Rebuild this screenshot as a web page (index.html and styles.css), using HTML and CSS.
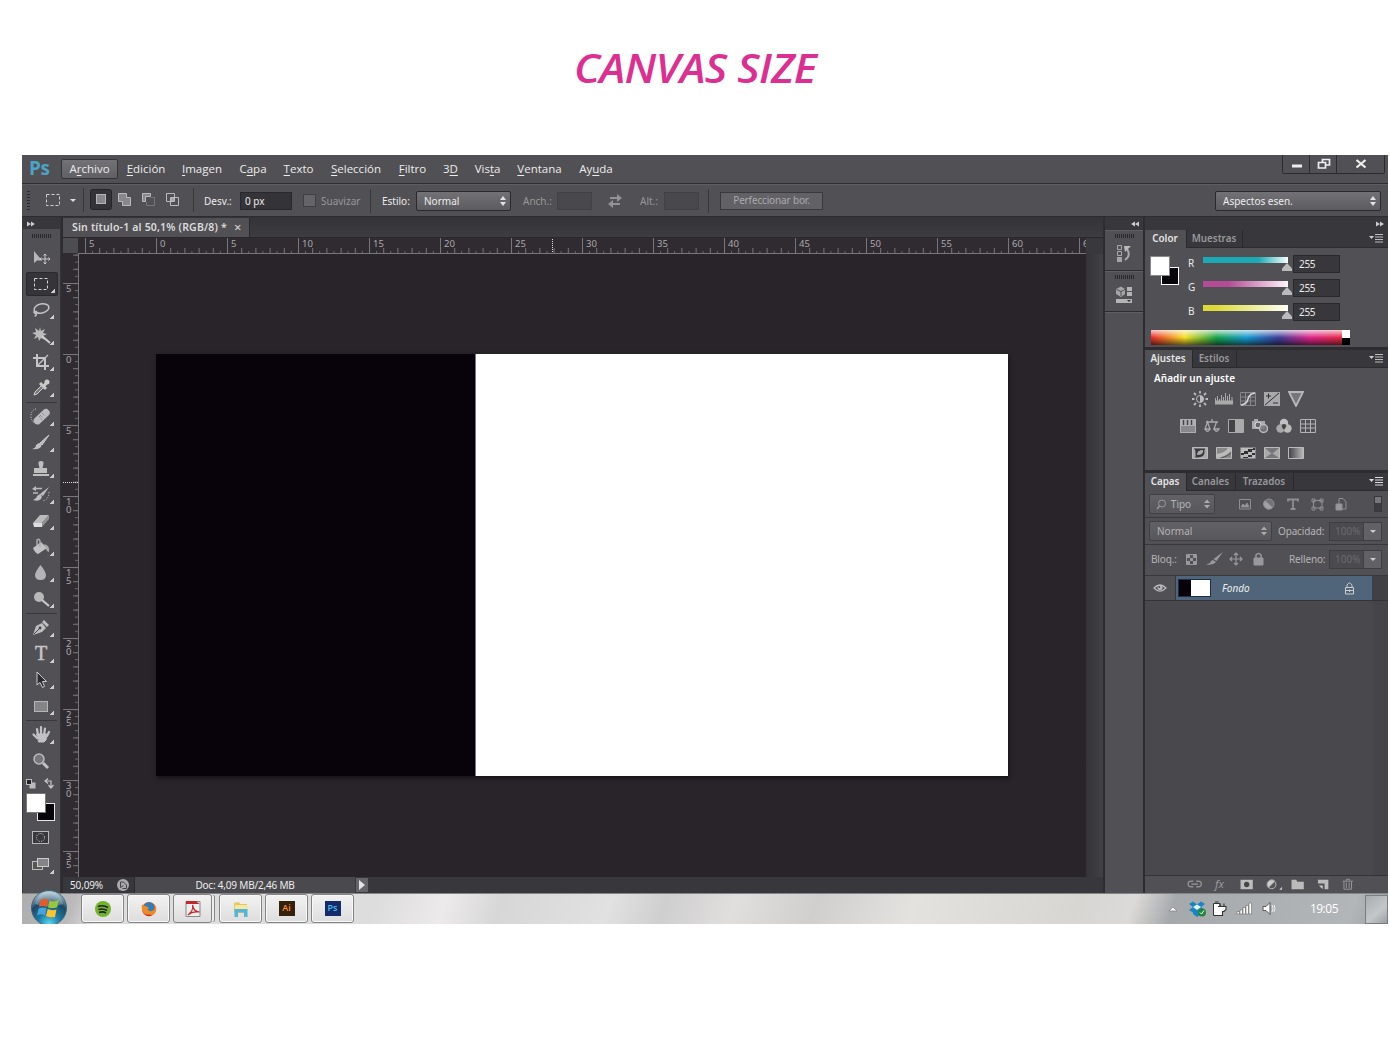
FILE: index.html
```html
<!DOCTYPE html>
<html lang="es">
<head>
<meta charset="utf-8">
<title>Canvas size</title>
<link rel="stylesheet" href="styles.css">
</head>
<body>
<h1 class="title">CANVAS SIZE</h1>
<main class="app">
  <header class="menubar">
    <span class="logo">Ps</span>
    <nav class="menu">
      <span class="item active w57">A<u>r</u>chivo</span><span class="item w55"><u>E</u>dición</span><span class="item w57"><u>I</u>magen</span><span class="item w45">C<u>a</u>pa</span><span class="item w46"><u>T</u>exto</span><span class="item w69"><u>S</u>elección</span><span class="item w44"><u>F</u>iltro</span><span class="item w32">3<u>D</u></span><span class="item w42">Vis<u>t</u>a</span><span class="item w62"><u>V</u>entana</span><span class="item w51">Ay<u>u</u>da</span>
    </nav>
    <div class="winbtns">
      <svg width="103" height="19" viewBox="0 0 103 19"><path d="M.5 0V17.500Q.5 18.500 1.500 18.500H101.500Q102.500 18.500 102.500 17.500V0M27.500 0V18M54.500 0V18" fill="none" stroke="#2c2b2f"/><path d="M10 9.500H20V12.500H10Z" fill="#eee"/><path d="M36.500 7.500H43.500V13H36.500ZM40.500 7V4.500H47.500V10H44" fill="none" stroke="#eee" stroke-width="1.700"/><path d="M74.500 5L83.500 12.500M83.500 5L74.500 12.500" stroke="#eee" stroke-width="2.200"/></svg>
    </div>
  </header>

  <section class="options">
    <svg class="opt-left" width="181" height="33" viewBox="0 0 181 33" fill="none">
      <path d="M6.500 7V26" stroke="#29282b" stroke-width="3" stroke-dasharray="1 2"/>
      <rect x="24.500" y="10.500" width="13" height="11" stroke="#d0d0d0" stroke-dasharray="3 2"/>
      <path d="M48 15H54L51 18Z" fill="#ddd"/>
      <path d="M61.500 4V28M171.500 4V28" stroke="#38373a"/>
      <rect x="68.500" y="5.500" width="21" height="20" rx="2" fill="#343337" stroke="#252428"/>
      <rect x="74.500" y="10.500" width="9" height="9" fill="#88878b" stroke="#b6b5b8"/>
      <g stroke="#bbb"><path d="M96.500 9.500H104.500V13.500H108.500V21.500H100.500V17.500H96.500Z" fill="#88878b"/><path d="M120.500 17.500V9.500H128.500V12.500H123.500V17.500Z" fill="#88878b"/><path d="M128.500 13.500H132.500V21.500H124.500V18" stroke="#77767a"/><path d="M144.500 9.500H152.500V17.500H144.500ZM148.500 13.500H156.500V21.500H148.500Z"/><path d="M149 14H152V17H149Z" fill="#999"/></g>
    </svg>
    <label class="olabel desv">Desv.:</label><span class="field f52">0 px</span>
    <span class="check"></span><label class="dim suav">Suavizar</label><i class="vsep"></i>
    <label class="olabel estilo">Estilo:</label>
    <span class="select s95">Normal<svg width="8" height="12" viewBox="0 0 8 12"><path d="M1 5L4 1L7 5ZM1 7L4 11L7 7Z" fill="#e3e3e3"/></svg></span>
    <label class="dim anch">Anch.:</label><span class="field off f34"></span>
    <svg class="swap" width="14" height="14" viewBox="0 0 14 14"><path d="M2 3H9V0L14 4L9 8V5H2ZM12 9H5V6L0 10L5 14V11H12Z" fill="#939296"/></svg>
    <label class="dim alt">Alt.:</label><span class="field off f34"></span><i class="vsep v2"></i>
    <span class="button">Perfeccionar bor.</span>
    <span class="select s165">Aspectos esen.<svg width="8" height="12" viewBox="0 0 8 12"><path d="M1 5L4 1L7 5ZM1 7L4 11L7 7Z" fill="#e3e3e3"/></svg></span>
  </section>

  <section class="workspace">
    <aside class="tools">
      <div class="dockhead"><svg width="8" height="6" viewBox="0 0 8 6"><path d="M0 .5L4 3L0 5.500ZM4 .5L8 3L4 5.500Z" fill="#ccc"/></svg></div>
      <div class="grip"></div>
      <div class="tool"><svg viewBox="0 0 38 26"><path d="M12 6V18L15 15.500H20Z" fill="#b7b6b8"/><path d="M23 9V19M18 14H28M21.500 10.500L23 9L24.500 10.500M21.500 17.500L23 19L24.500 17.500M19.500 12.500L18 14L19.500 15.500M26.500 12.500L28 14L26.500 15.500" fill="none" stroke="#ccc"/></svg></div>
      <div class="tool on more"><svg viewBox="0 0 38 26"><rect x="12.500" y="7.500" width="13" height="11" fill="none" stroke="#d4d4d4" stroke-dasharray="3 2"/></svg></div>
      <div class="tool more"><svg viewBox="0 0 38 26" fill="none" stroke="#c4c3c5" stroke-width="1.500"><ellipse cx="19.500" cy="11.500" rx="7.500" ry="4.500" transform="rotate(-12 19.500 11.500)"/><path d="M13 14Q11 15 13 16.500Q16 16 14 14M14 16Q15 19 12.500 19"/></svg></div>
      <div class="tool more"><svg viewBox="0 0 38 26"><path d="M18 4L19 8L23 6L21 10L25 11L21 13L23 17L19 15L17 18L16 14L12 16L14 12L10 10L14 9L13 5L17 8Z" fill="#bbb"/><path d="M20 13L28 20" stroke="#ccc" stroke-width="2"/></svg></div>
      <div class="tool more"><svg viewBox="0 0 38 26" fill="none" stroke="#c5c4c6" stroke-width="2"><path d="M15 5V17H27M11 9H23V21"/><path d="M16 16L26 6" stroke-width="1.200"/></svg></div>
      <div class="tool more"><svg viewBox="0 0 38 26"><path d="M12 20L13 17L20 10L22 12L15 19Z" fill="#777" stroke="#d0d0d0"/><path d="M18 8L24 14M22 11L25 7" stroke="#c8c8c8" stroke-width="3"/><circle cx="25" cy="7" r="2.500" fill="#ccc"/></svg></div>
      <hr class="tsep">
      <div class="tool more"><svg viewBox="0 0 38 26"><path d="M14 5Q9 6 9 12Q9 18 14 19" fill="none" stroke="#ddd" stroke-dasharray="1 1.500"/><rect x="10" y="9" width="19" height="7.500" rx="3.700" transform="rotate(-43 19.500 12.500)" fill="#bdbcbe"/><path d="M17 12L20 16M18 11L21 14M20 9L23 12" stroke="#777" stroke-dasharray="1 1"/></svg></div>
      <div class="tool more"><svg viewBox="0 0 38 26"><path d="M27 5L20 15L17.500 13.500Z" fill="#bbb" stroke="#ccc"/><path d="M17 13Q20 14 19 17Q16 20 10 19Q14 18 14 15Z" fill="#c2c1c3"/></svg></div>
      <div class="tool more"><svg viewBox="0 0 38 26"><path d="M17.500 12L16.500 8Q16 5 19 5Q22 5 21.500 8L20.500 12H25V17H12V12ZM11 18H27V20H11Z" fill="#bfbec0"/></svg></div>
      <div class="tool more"><svg viewBox="0 0 38 26"><path d="M27 5L21 14L18 12ZM18 12Q21 14 19 17Q16 20 11 18Q15 16 15 14Z" fill="#bfbec0"/><path d="M20 6.500H12M11 11H16" fill="none" stroke="#bbb" stroke-width="1.500"/><path d="M10 7L14 4V9Z" fill="#bbb"/><path d="M27 10Q27 18 20 19" fill="none" stroke="#ccc" stroke-dasharray="1 1.500"/></svg></div>
      <div class="tool more"><svg viewBox="0 0 38 26"><path d="M11 15L18 7H27L20 15Z" fill="#bbb"/><path d="M11 15H20V19H12Z" fill="#ddd"/><path d="M20 15L27 7V11L20 19Z" fill="#929194"/></svg></div>
      <div class="tool more"><svg viewBox="0 0 38 26"><path d="M11 14L19 8L25 14L16 20Q13 19 11 14Z" fill="#c2c1c3"/><path d="M18 13V7Q17 4 15 6V11" fill="none" stroke="#aaa" stroke-width="1.500"/><path d="M22 10Q28 11 27 18Q24 17 24 14Z" fill="#aaa"/></svg></div>
      <div class="tool more"><svg viewBox="0 0 38 26"><path d="M18.500 5Q13 12 13 15Q13 20 18.500 20Q24 20 24 15Q24 12 18.500 5Z" fill="#b4b3b5"/></svg></div>
      <div class="tool more"><svg viewBox="0 0 38 26"><circle cx="17" cy="11" r="5" fill="#b8b7b9"/><path d="M20 14L27 20" stroke="#c8c8c8" stroke-width="2.200"/></svg></div>
      <hr class="tsep">
      <div class="tool more"><svg viewBox="0 0 38 26"><path d="M11 20L14 11L20 8L24 13L20 17ZM20 7L22 5L27 10L25 12Z" fill="#bfbec0"/><path d="M12 19L18 13" stroke="#444"/><circle cx="18" cy="13" r="1.400" fill="#444"/></svg></div>
      <div class="tool more"><span class="tee">T</span></div>
      <div class="tool more"><svg viewBox="0 0 38 26"><path d="M15 5V18L18 15.500L20.500 20.500L22.500 19.500L20.500 14.500H24.500Z" fill="#2c2b2f" stroke="#ccc"/></svg></div>
      <div class="tool more"><svg viewBox="0 0 38 26"><rect x="12.500" y="8.500" width="13" height="10" fill="#858487" stroke="#b5b4b7"/></svg></div>
      <hr class="tsep">
      <div class="tool more"><svg viewBox="0 0 38 26" fill="none" stroke="#c2c1c3" stroke-linecap="round"><path d="M16 13L15 7M19 12V5M22 13L23 6.500M25 14L27 10M15 16L11.500 12.500" stroke-width="2.200"/><path d="M15 12H25L24 18L22 20H17Z" fill="#c2c1c3"/></svg></div>
      <div class="tool"><svg viewBox="0 0 38 26"><circle cx="17" cy="11" r="5" fill="#77767a" stroke="#bbb" stroke-width="1.500"/><path d="M21 15L26 20" stroke="#c0bfc1" stroke-width="3"/></svg></div>
      <svg class="swatches" width="38" height="50" viewBox="0 0 38 50"><rect x="7.500" y="8.500" width="6" height="6" fill="#bbb"/><rect x="4.500" y="5.500" width="5" height="5" fill="#222" stroke="#bbb"/><path d="M24 7H29V13M26 4.500L23 7L26 9.500M26.500 11L29 14L31.500 11" fill="none" stroke="#c8c8c8" stroke-width="1.200"/><rect x="15.500" y="29.500" width="17" height="17" fill="#070509" stroke="#e5e5e5"/><rect x="4.500" y="19.500" width="19" height="19" fill="#fff" stroke="#777"/></svg>
      <div class="tool"><svg viewBox="0 0 38 26"><rect x="10.500" y="6.500" width="16" height="12" fill="#39383c" stroke="#b7b6b8"/><circle cx="18.500" cy="12.500" r="4" fill="none" stroke="#ddd" stroke-dasharray="1 1.300"/></svg></div>
      <div class="tool more last"><svg viewBox="0 0 38 26"><rect x="10.500" y="9.500" width="10" height="8" fill="#555" stroke="#bbb"/><rect x="15.500" y="6.500" width="11" height="8" fill="#858487" stroke="#ccc"/></svg></div>
    </aside>

    <section class="document">
      <div class="tabs"><span class="doctab">Sin título-1 al 50,1% (RGB/8) *<b class="close">×</b></span></div>
      <div class="view">
        <svg class="hruler" width="1040" height="16" viewBox="0 0 1040 16">
          <defs><pattern id="hm" x="22" width="14.200" height="16" patternUnits="userSpaceOnUse"><path d="M.5 10V15" stroke="#77767a"/></pattern><pattern id="hs" x="29" width="14.200" height="16" patternUnits="userSpaceOnUse"><path d="M.5 13V15" stroke="#68676a"/></pattern><pattern id="hb" x="22" width="71" height="16" patternUnits="userSpaceOnUse"><path d="M.5 0V15" stroke="#77767a"/></pattern></defs>
          <rect width="1023" height="16" fill="#302b31"/><rect width="15" height="15" fill="#4d4c50"/>
          <g><rect x="22" width="1001" height="16" fill="url(#hm)"/><rect x="22" width="1001" height="16" fill="url(#hs)"/><rect x="22" width="1001" height="16" fill="url(#hb)"/></g>
          <path d="M15 15.500H1023" stroke="#77767a"/><path d="M489.500 1V15" stroke="#ddd" stroke-dasharray="1 1"/>
          <g class="rt"><text x="26" y="8.500">5</text><text x="97" y="8.500">0</text><text x="168" y="8.500">5</text><text x="239" y="8.500">10</text><text x="310" y="8.500">15</text><text x="381" y="8.500">20</text><text x="452" y="8.500">25</text><text x="523" y="8.500">30</text><text x="594" y="8.500">35</text><text x="665" y="8.500">40</text><text x="736" y="8.500">45</text><text x="807" y="8.500">50</text><text x="878" y="8.500">55</text><text x="949" y="8.500">60</text><text x="1020" y="8.500">6</text></g>
          <rect x="1023" width="17" height="16" fill="#39383c"/>
        </svg>
        <div class="canvasrow">
          <svg class="vruler" width="16" height="623" viewBox="0 0 16 623">
            <defs><pattern id="vm" y="29" width="16" height="14.200" patternUnits="userSpaceOnUse"><path d="M10 .5H15" stroke="#77767a"/></pattern><pattern id="vs" y="36" width="16" height="7.100" patternUnits="userSpaceOnUse"><path d="M12 .5H15" stroke="#68676a"/></pattern><pattern id="vb" y="29" width="16" height="71" patternUnits="userSpaceOnUse"><path d="M0 .5H15" stroke="#77767a"/></pattern></defs>
            <rect width="16" height="623" fill="#302b31"/><rect width="16" height="623" fill="url(#vm)"/><rect width="16" height="623" fill="url(#vs)"/><rect width="16" height="623" fill="url(#vb)"/>
            <path d="M15.500 0V623" stroke="#77767a"/><path d="M0 228.500H15" stroke="#ddd" stroke-dasharray="1 1"/>
            <g class="rt"><text x="3" y="38">5</text><text x="3" y="109">0</text><text x="3" y="180">5</text><text x="3" y="251">1</text><text x="3" y="259">0</text><text x="3" y="322">1</text><text x="3" y="330">5</text><text x="3" y="393">2</text><text x="3" y="401">0</text><text x="3" y="464">2</text><text x="3" y="472">5</text><text x="3" y="535">3</text><text x="3" y="543">0</text><text x="3" y="606">3</text><text x="3" y="614">5</text></g>
          </svg>
          <div class="stage"><div class="artboard"><div class="black"></div></div></div>
          <div class="vscroll"></div>
        </div>
      </div>
      <footer class="status">
        <span class="zoomv">50,09%</span>
        <svg width="14" height="14" viewBox="0 0 14 14"><circle cx="7" cy="7" r="6" fill="#aaa9ab"/><path d="M4.500 4H7.500L10.500 7V10.500H6.500M4.500 4V9.500L7.500 7.500" fill="none" stroke="#444"/></svg>
        <span class="docsize">Doc: 4,09 MB/2,46 MB</span>
        <span class="play"><svg width="6" height="10" viewBox="0 0 6 10"><path d="M0 0L6 5L0 10Z" fill="#e5e5e5"/></svg></span>
      </footer>
    </section>

    <aside class="strip">
      <div class="dockhead right"><svg width="8" height="6" viewBox="0 0 8 6"><path d="M4 .5L0 3L4 5.500ZM8 .5L4 3L8 5.500Z" fill="#ccc"/></svg></div>
      <div class="cell"><div class="grip"></div><svg width="18" height="20" viewBox="0 0 18 20"><path d="M2.500 1.500H6.500V5.500H2.500ZM2.500 7.500H6.500V11.500H2.500Z" fill="none" stroke="#aaa"/><rect x="2" y="13" width="5" height="5" fill="#a5a4a7"/><path d="M10 16Q17 11 11 4" fill="none" stroke="#aaa" stroke-width="2"/><path d="M9 2H16L10 8Z" fill="#bbb"/></svg></div>
      <div class="cell"><div class="grip"></div><svg width="18" height="20" viewBox="0 0 18 20"><path d="M1 4L6 1.500L10 4V9L6 12L1 9Z" fill="#a5a4a7"/><path d="M1.500 4.500L6 6.500L10 4.500M6 6.500V11" stroke="#515054" fill="none"/><path d="M12 2H17V6H12ZM12 7H17V11H12ZM1 14H17V18H1Z" fill="#b4b3b6"/><path d="M12 15H16L14 17Z" fill="#333"/></svg></div>
      <div class="cell rest"></div>
    </aside>

    <aside class="panels">
      <div class="dockhead right"><svg width="8" height="6" viewBox="0 0 8 6"><path d="M0 .5L4 3L0 5.500ZM4 .5L8 3L4 5.500Z" fill="#ccc"/></svg></div>
      <section class="panel color">
        <div class="ptabs"><span class="on pt42">Color</span><span class="pt56">Muestras</span><svg class="pmenu" width="14" height="9" viewBox="0 0 14 9"><path d="M0 2H5L2.500 5Z" fill="#ccc"/><path d="M6 .5H14M6 3H14M6 5.500H14M6 8H14" stroke="#bbb"/></svg></div>
        <div class="colorbody">
          <svg width="32" height="34" viewBox="0 0 32 34"><rect x="11.500" y="11.500" width="17" height="17" fill="#070509" stroke="#fff"/><rect x="0.500" y="0.500" width="19" height="19" fill="#fff" stroke="#88878a"/></svg>
          <div class="sliders">
            <div class="slider"><span>R</span><i class="track cy"></i><b>255</b></div>
            <div class="slider"><span>G</span><i class="track ma"></i><b>255</b></div>
            <div class="slider"><span>B</span><i class="track ye"></i><b>255</b></div>
          </div>
        </div>
        <div class="spectrum"><i></i></div>
      </section>
      <section class="panel adjust">
        <div class="ptabs"><span class="on pt48">Ajustes</span><span class="pt44">Estilos</span><svg class="pmenu" width="14" height="9" viewBox="0 0 14 9"><path d="M0 2H5L2.500 5Z" fill="#ccc"/><path d="M6 .5H14M6 3H14M6 5.500H14M6 8H14" stroke="#bbb"/></svg></div>
        <p class="addadj">Añadir un ajuste</p>
        <div class="icons r1">
          <svg viewBox="0 0 16 16"><circle cx="8" cy="8" r="3.500" fill="none" stroke="#bbb"/><path d="M8 4.500A3.500 3.500 0 0 1 8 11.500Z" fill="#bbb"/><path d="M8 0V2.500M8 13.500V16M0 8H2.500M13.500 8H16M2 2L4 4M12 12L14 14M2 14L4 12M12 4L14 2" stroke="#bbb" stroke-width="1.800"/></svg>
          <svg class="wide" viewBox="0 0 18 16"><path d="M0 13H18V10H0ZM.5 7V10M2.500 5V10M4.500 8V10M6.500 4V10M8.500 6V10M10.500 2V10M12.500 5V10M14.500 3V10M17 6V10" fill="#aaa" stroke="#aaa"/></svg>
          <svg viewBox="0 0 16 16" fill="none"><path d="M.5 1.500H15.500V14.500H.5ZM5.500 2V14M10.500 2V14M1 6H15M1 10H15" stroke="#88878b"/><path d="M1 14Q7 13 8 8Q9 3 15 2" stroke="#d4d4d4" stroke-width="1.500"/></svg>
          <svg viewBox="0 0 16 16"><rect y="1" width="16" height="14" fill="#a9a8ab"/><path d="M2 5H7M4.500 2.500V7.500M9 12H14M1 14L15 2" stroke="#333"/></svg>
          <svg viewBox="0 0 16 16"><path d="M1 1H15L8 15Z" fill="#77767a" stroke="#b8b7ba" stroke-width="1.800"/></svg>
        </div>
        <div class="icons r2">
          <svg viewBox="0 0 16 16"><rect y="1" width="16" height="14" fill="#b0afb2"/><path d="M3.500 2V7M7.500 2V7M11.500 2V7" stroke="#444" stroke-width="1.500"/><path d="M1 8H15V14H1Z" fill="#89888b"/></svg>
          <svg viewBox="0 0 16 16" fill="none" stroke="#aaa" stroke-width="1.300"><path d="M8 1V4M2 4H14M3.500 4L1 11H6ZM12.500 4L10 11H15M1 11Q3.500 16 6 11M10 11Q12.500 16 15 11Z"/></svg>
          <svg viewBox="0 0 16 16"><path d="M.5 1.500H15.500V14.500H.5Z" fill="#444" stroke="#aaa"/><path d="M7 2H15V14H7Z" fill="#aaa"/></svg>
          <svg viewBox="0 0 16 16"><path d="M0 3H2V1H6V3H13V11H0Z" fill="#aaa"/><circle cx="6" cy="7" r="3" fill="#666" stroke="#ddd"/><circle cx="11.500" cy="10.500" r="4" fill="#77767acc" stroke="#bbb" stroke-width="1.500"/></svg>
          <svg viewBox="0 0 16 16"><circle cx="8" cy="5" r="4.200" fill="#c1c0c3"/><circle cx="4.500" cy="10.500" r="4.200" fill="#a9a8ab"/><circle cx="11.500" cy="10.500" r="4.200" fill="#bbb"/><path d="M8 12Q5 9 6 6.500Q10 5 10.500 8Z" fill="#444"/></svg>
          <svg viewBox="0 0 16 16" fill="none" stroke="#b3b2b5"><path d="M.5 1.500H15.500V14.500H.5ZM5.500 2V14M10.500 2V14M1 6H15M1 10H15"/></svg>
        </div>
        <div class="icons r3">
          <svg viewBox="0 0 16 16"><path d="M.5 2.500H15.500V13.500H.5Z" fill="#aaa" stroke="#bbb"/><path d="M2 3.500H13Q12 6 12.500 8Q12 12 6 12.500H3Q4 11 3.500 8Q4 5 2 3.500Z" fill="#39383c"/><path d="M5 10Q5 5 11 5Q12 10 5 10Z" fill="#aaa"/></svg>
          <svg viewBox="0 0 16 16"><path d="M.5 2.500H15.500V13.500H.5Z" fill="#888" stroke="#bbb"/><path d="M1 9Q9 8 12 3H15V6Q9 12 1 13Z" fill="#bbb"/><path d="M5 13Q12 11 15 8" stroke="#555" fill="none"/></svg>
          <svg viewBox="0 0 16 16"><path d="M.5 2.500H15.500V13.500H.5Z" fill="#bbb"/><path d="M1 8H4V6H8V4H13V3H15V5H12V7H8V9H4V10H1ZM3 13V12H8V10H12V8H15V10H12V12H8V13Z" fill="#333"/></svg>
          <svg viewBox="0 0 16 16"><path d="M.5 2.500H15.500V13.500H.5Z" fill="#77767a" stroke="#bbb"/><path d="M1 3L8 9L15 3V13L8 8L1 13Z" fill="#aaa"/></svg>
          <svg viewBox="0 0 16 16"><defs><linearGradient id="gm"><stop stop-color="#414044"/><stop offset="1" stop-color="#bbb"/></linearGradient></defs><path d="M.5 2.500H15.500V13.500H.5Z" fill="url(#gm)" stroke="#bbb"/></svg>
        </div>
      </section>
      <section class="panel layers">
        <div class="ptabs"><span class="on pt42">Capas</span><span class="pt49">Canales</span><span class="pt57">Trazados</span><svg class="pmenu" width="14" height="9" viewBox="0 0 14 9"><path d="M0 2H5L2.500 5Z" fill="#ddd"/><path d="M6 .5H14M6 3H14M6 5.500H14M6 8H14" stroke="#ddd"/></svg></div>
        <div class="lrow filter">
          <span class="select muted s64"><svg width="11" height="11" viewBox="0 0 11 11" fill="none" stroke="#99989b"><circle cx="6" cy="4.500" r="3.500"/><path d="M3.500 7L1 10" stroke-width="1.500"/></svg><span class="tipo">Tipo</span><svg width="8" height="12" viewBox="0 0 8 12"><path d="M1 5L4 1.500L7 5ZM1 7L4 10.500L7 7Z" fill="#aaa"/></svg></span>
          <svg class="kinds" width="110" height="14" viewBox="0 0 110 14" fill="none" stroke="#8f8e91"><path d="M1.500 2.500H12.500V12H1.500Z"/><path d="M3 10L5 7L7 9L9 6L11 10Z" fill="#99989b"/><circle cx="31" cy="7" r="5" fill="#737276"/><path d="M27 3.500A5 5 0 1 0 34.500 10.500Z" fill="#a2a1a4"/><path d="M50 4.500V2.500H60V4.500M55 3V12M52.500 12H57.500" stroke-width="1.800"/><path d="M75.500 3.500H84V11H75.500ZM74 2H77V5H74ZM82 2H85V5H82ZM74 10H77V13H74ZM82 10H85V13H82Z"/><path d="M101 7V1.500H105L108 5V12H104"/><path d="M98 7H104V13H98Z" fill="#99989b"/></svg>
          <span class="toggle"></span>
        </div>
        <div class="lrow">
          <span class="select muted s122">Normal<svg width="8" height="12" viewBox="0 0 8 12"><path d="M1 5L4 1.500L7 5ZM1 7L4 10.500L7 7Z" fill="#aaa"/></svg></span>
          <label class="opa">Opacidad:</label><span class="pct">100%<i></i></span>
        </div>
        <div class="lrow lock">
          <label class="bloq">Bloq.:</label>
          <svg width="80" height="14" viewBox="0 0 80 14" fill="none" stroke="#99989b"><path d="M.5 2.500H10.500V12.500H.5Z"/><path d="M1 3H4V6H1ZM7 3H10V6H7ZM4 6H7V9H4ZM1 9H4V12H1ZM7 9H10V12H7Z" fill="#99989b" stroke="none"/><path d="M37 0L30.500 9L27.500 7ZM27 8L30 10Q27 13.500 20 12.500Q25 11 25 9Z" fill="#99989b" stroke="none"/><path d="M44 7H56M50 1V13M48 3L50 1L52 3M48 11L50 13L52 11M46 5L44 7L46 9M54 5L56 7L54 9" stroke-width="1.200"/><path d="M68 6H77V13H68Z" fill="#99989b"/><path d="M70 6V3Q72.500 0 75 3V6" stroke-width="1.500"/></svg>
          <label class="opa rel">Relleno:</label><span class="pct">100%<i></i></span>
        </div>
        <div class="layerlist">
          <div class="layer">
            <span class="eye"><svg width="14" height="10" viewBox="0 0 14 10"><path d="M1 5Q7 -1 13 5Q7 11 1 5Z" fill="none" stroke="#bbb" stroke-width="1.200"/><circle cx="7" cy="4.500" r="2.500" fill="#bbb"/><circle cx="6.300" cy="4" r="1" fill="#444"/></svg></span>
            <span class="lbody"><span class="thumb"></span><em>Fondo</em><svg width="11" height="13" viewBox="0 0 11 13" fill="none" stroke="#ccc"><path d="M1.500 5.500H9.500V12H1.500ZM3 5V3Q5.500 -1 8 3V5M5.500 7.500V10M1.500 8.500H9"/></svg></span>
            <span class="lside"></span>
          </div>
          <div class="empty"></div>
        </div>
        <svg class="lfoot" width="243" height="18" viewBox="0 0 243 18" fill="none" stroke="#99989b"><path d="M44 5H42Q38.500 5 38.500 8Q38.500 11 42 11H44M47 5H49Q52.500 5 52.500 8Q52.500 11 49 11H47M42 8H49" transform="translate(0 .5)" stroke-width="1.300"/><text class="fx" x="67" y="13">fx</text><path d="M94 4H107V14H94Z" fill="#bcbbbe" stroke="none"/><circle cx="100.500" cy="9" r="2.800" fill="#444" stroke="none"/><circle cx="127" cy="9" r="4.500" fill="#555" stroke="#bbb"/><path d="M123.500 12.500A4.800 4.800 0 0 1 130.500 5.500Z" fill="#ccc"/><path d="M135 14.500H138V11.500Z" fill="#ccc" stroke="none"/><path d="M148 4H153L154 6H161V14H148Z" fill="#bbb" stroke="none"/><path d="M176 4H187V14H183V8H176Z" fill="#bbb" stroke="none"/><path d="M177 10H181V14Z" fill="#ccc" stroke="none"/><path d="M202 5.500H213M206 5V3.500H209.500V5M203.500 6V14H211.500V6M206 7V13M209 7V13"/></svg>
      </section>
    </aside>
  </section>

  <footer class="taskbar">
    <svg class="orb" width="38" height="38" viewBox="0 0 38 38"><defs><radialGradient id="ob" cx=".5" cy=".95" r=".9"><stop stop-color="#5fd7ee"/><stop offset=".35" stop-color="#1c7ba6"/><stop offset=".7" stop-color="#1d4766"/><stop offset="1" stop-color="#a8c3d2"/></radialGradient></defs><circle cx="19" cy="19" r="17.500" fill="url(#ob)" stroke="#41637a"/><path d="M5 15Q8 3 19 3Q30 3 33 15Q20 20 5 15Z" fill="#fff" opacity=".25"/><path d="M11 11Q14 8.500 18.500 11L17 18Q13 16 9 18Z" fill="#e9582a"/><path d="M19.500 11.500Q23.500 13.500 29 11L27 18.500Q22 20 18 18.500Z" fill="#94c83d"/><path d="M8.700 19.500Q13 17.500 16.500 19.500L15 26.500Q11 24 7 26.500Z" fill="#43a5dc"/><path d="M17.700 20Q22 22 26.500 20.500L25 28Q20 29 16 27Z" fill="#fbc52d"/></svg>
    <div class="tasks">
      <span class="task"><svg viewBox="0 0 18 18"><circle cx="9" cy="9" r="8" fill="#72b52b"/><path d="M4 6.500Q9 4.500 14 7.500M4.500 9.500Q9 8 13 10.500M5 12.500Q9 11 12 13" fill="none" stroke="#222" stroke-width="1.600"/></svg></span>
      <span class="task"><svg viewBox="0 0 18 18"><circle cx="9" cy="9" r="7" fill="#e0521f"/><circle cx="9" cy="7.500" r="5.200" fill="#2b7fc0"/><path d="M2 4.500Q4 6 6 6L9 8L7.500 9.500Q10 12.500 14 10Q15.500 7 14 4Q19 10 13.500 14.500Q7 18 3 12.500Q1 8 2 4.500Z" fill="#f08a24"/><path d="M2.500 11Q5 16 10 14.500L12 15.500Q5 18 2.500 11Z" fill="#c9252b"/></svg></span>
      <span class="task stack"><svg viewBox="0 0 18 18"><path d="M2 1.500H16V16.500H2Z" fill="#eee" stroke="#888"/><path d="M2 1H12L15.500 4H2Z" fill="#c4262e"/><path d="M4 15Q10 10 8.500 5Q10 12 15.500 12Q8 11 4 15Z" fill="none" stroke="#c4262e" stroke-width="1.200"/></svg></span>
      <span class="task"><svg viewBox="0 0 18 18"><path d="M2 3L7 2L8 4H15V13H2Z" fill="#e7c65b"/><path d="M3 5H16V12H3Z" fill="#f5e8a6"/><path d="M2.500 9H15.500V17H12V12.500H6V17H2.500Z" fill="#55b5d7"/></svg></span>
      <span class="task"><b class="ai">Ai</b></span>
      <span class="task"><b class="psi">Ps</b></span>
    </div>
    <div class="tray">
      <svg width="115" height="18" viewBox="0 0 115 18"><path d="M2 11H10L6 7Z" fill="#f4f4f4" stroke="#777" stroke-width=".6"/><path d="M22 4L26 1.500L30 4.500L34 1.500L38 4L34 7L38 10L34 12.500V14L30 17L26 14V12.500L22 10L26 7Z" fill="#1786c5"/><path d="M26 7L30 4.500L34 7L30 10Z" fill="#e7f5fc"/><circle cx="35" cy="12.500" r="4" fill="#23843c"/><path d="M33 12.500L34.500 14L37 10.500" stroke="#fff" fill="none"/><path d="M46.500 3.500H53V15.500H46.500ZM48 2H51.500" fill="#fff" stroke="#333"/><path d="M53 6V3.500M57 6V3.500M51 6.500H59V9.500L57 11.500H55.500V15.500H50" fill="#fff" stroke="#333" stroke-width="1.100"/><path d="M70 14V11.500H72.500V14ZM73 14V10H75.500V14ZM76 14V7.500H78.500V14ZM79 14V5.500H81.500V14ZM82 14V3H84.500V14Z" fill="#fff" stroke="#666" stroke-width=".6"/><path d="M96 6.500H99L103 2.500V14.500L99 10.500H96Z" fill="#fff" stroke="#555"/><path d="M105 5Q107 8.500 105 12M107 5Q109 8.500 107 12" fill="none" stroke="#eee"/></svg>
      <time>19:05</time>
      <span class="desk"></span>
    </div>
  </footer>
</main>
</body>
</html>
```
FILE: styles.css
```css
* { box-sizing: border-box; }
body { margin: 0; width: 1390px; height: 1043px; background: #fff; overflow: hidden; font: 10px/12px "Noto Sans", sans-serif; color: #ececec; }
svg { display: block; flex: none; }
label, span, time { white-space: nowrap; }
.title { margin: 0 0 0 574px; width: 222px; height: 155px; padding-top: 44px; font: italic 600 39.500px/48px "Open Sans", sans-serif; letter-spacing: -.6px; color: #dc2f91; white-space: nowrap; transform: scaleX(1.1); transform-origin: left; }
.app { margin-left: 22px; width: 1366px; height: 769px; background: #515054; display: flex; flex-direction: column; overflow: hidden; }

.menubar { height: 29px; flex: none; display: flex; border-bottom: 1px solid #2d2c30; }
.logo { width: 39px; padding-left: 7px; color: #4ba3c7; font: 700 19px/26px "Open Sans", sans-serif; letter-spacing: -.5px; }
.menu { display: flex; padding-top: 4px; font: 11.500px/19px "Open Sans", sans-serif; }
.menu u { text-underline-offset: 2px; }
.item { height: 20px; text-align: center; padding-left: 1px; }
.active { padding: 0; border: 1px solid #343337; border-radius: 2px; background: linear-gradient(#737276, #606064); line-height: 18px; }
.w57 { width: 57px; } .w55 { width: 55px; } .w45 { width: 45px; } .w46 { width: 46px; } .w69 { width: 69px; }
.w44 { width: 44px; } .w32 { width: 32px; } .w42 { width: 42px; } .w62 { width: 62px; } .w51 { width: 51px; }
.winbtns { margin-left: auto; margin-right: 3px; }

.options { height: 33px; flex: none; display: flex; align-items: center; border-bottom: 1px solid #2d2c30; border-top: 1px solid #5e5d61; }
.options label, .select, .field, .button { font-size: 10px; line-height: 14px; }
.dim { color: #98979a; }
.desv { width: 36px; margin-left: 1px; }
.field { height: 18px; background: #343337; border: 1px solid #28272a; padding: 1px 4px; }
.f52 { width: 52px; } .f34 { width: 35px; }
.field.off { background: #49484c; border-color: #424145; }
.check { width: 13px; height: 13px; margin: 0 5px 0 11px; background: #656468; border: 1px solid #403f43; }
.suav { width: 49px; }
.vsep { width: 1px; height: 24px; background: #38373a; }
.estilo { margin-left: 11px; width: 34px; }
.select { display: flex; align-items: center; justify-content: space-between; height: 20px; padding: 0 3px 0 7px; border: 1px solid #2a292d; border-radius: 2px; background: linear-gradient(#727175, #5c5b5f); }
.s95 { width: 95px; }
.anch { margin-left: 12px; width: 34px; }
.swap { margin: 0 18px 0 16px; }
.alt { width: 24px; }
.v2 { margin-left: 9px; }
.button { width: 103px; height: 18px; margin-left: 11px; text-align: center; line-height: 15px; border: 1px solid #39383c; background: #626165; color: #aaa9ac; letter-spacing: -.15px; }
.s165 { width: 166px; margin-left: auto; margin-right: 7px; }

.workspace { height: 676px; flex: none; display: flex; background: #2d2c30; }
.tools { width: 39px; background: #515054; display: flex; flex-direction: column; border-right: 1px solid #343337; border-left: 1px solid #3a393d; }
.dockhead { height: 12px; flex: none; background: #38373b; display: flex; align-items: center; padding: 1px 4px 0; }
.dockhead.right { justify-content: flex-end; height: 13px; }
.grip { width: 19px; height: 4px; margin: 4px auto 0; background: repeating-linear-gradient(90deg, #29282c 0 1px, #515054 1px 2px); }
.tools .grip { margin: 5px auto 7px 9px; flex: none; }
.tool { position: relative; width: 38px; height: 26px; flex: none; }
.tool svg { width: 38px; height: 26px; margin-left: -1px; }
.tool.on { background: #353438; width: 32px; height: 24px; margin: 1px 0 1px 3px; border: 1px solid #29282c; border-radius: 2px; }
.tool.on svg { margin: -2px 0 0 -5px; }
.more::after { content: ""; position: absolute; right: 7px; bottom: 4px; width: 4px; height: 4px; background: linear-gradient(135deg, transparent 50%, #ccc 50%); }
.more.on::after { right: 2px; bottom: 2px; }
.tsep { width: 31px; height: 1px; margin: 1px 3px; border: 0; background: #38373b; flex: none; }
.tee { display: block; font: 20px/25px "Liberation Serif", serif; color: #c6c5c8; padding-left: 12px; -webkit-text-stroke: .5px #c6c5c8; }
.swatches { margin: 0 0 1px -1px; }
.last { margin-top: 1px; }

.document { width: 1040px; margin-left: 2px; display: flex; flex-direction: column; background: #39383c; }
.tabs { height: 21px; background: linear-gradient(#343337, #3d3c40); display: flex; padding-top: 1px; border-bottom: 1px solid #29282b; }
.doctab { width: 187px; padding-left: 9px; background: #515054; border-right: 1px solid #29282c; font: 600 10.500px/19px "Noto Sans", sans-serif; letter-spacing: .18px; display: flex; color: #dcdcdc; }
.close { margin-left: 7px; font: 13px/19px "Noto Sans", sans-serif; }
.rt { fill: #aba9ac; font: 9.500px "Noto Sans", sans-serif; }
.canvasrow { display: flex; height: 623px; }
.stage { width: 1007px; background: #28242a; padding: 100px 0 0 77px; }
.artboard { width: 852px; height: 422px; background: #fff; box-shadow: 1px 2px 4px #151217; }
.black { width: 320px; height: 422px; background: #08030b; border-right: 1px solid #77747a; }
.vscroll { width: 17px; background: linear-gradient(90deg, #343337, #414044); }
.status { height: 16px; display: flex; align-items: center; background: #38373b; }
.zoomv { width: 53px; padding-left: 7px; line-height: 16px; letter-spacing: -.15px; }
.docsize { width: 221px; margin-left: 4px; height: 16px; line-height: 16px; text-align: center; background: #4a494d; border-left: 1px solid #2b2a2e; letter-spacing: -.2px; }
.play { width: 14px; height: 16px; display: grid; place-items: center; background: #656468; border: 1px solid #39383c; }

.strip { width: 38px; margin-left: 2px; display: flex; flex-direction: column; }
.cell { height: 40px; background: #515054; margin-bottom: 1px; border-top: 1px solid #5f5e62; }
.cell .grip { margin-top: 3px; }
.cell svg { margin: 6px 0 0 10px; }
.rest { flex: 1; margin: 0; }
.panels { width: 243px; margin-left: 2px; display: flex; flex-direction: column; }
.panel { background: #515054; }
.color { height: 117px; margin-bottom: 3px; }
.adjust { height: 120px; margin-bottom: 3px; }
.layers { flex: 1; display: flex; flex-direction: column; }
.ptabs { height: 18px; flex: none; display: flex; background: #38373b; border-bottom: 1px solid #2c2b2f; align-items: stretch; font: 600 9.800px/17px "Noto Sans", sans-serif; color: #99989c; }
.ptabs span { text-align: center; border-right: 1px solid #29282c; padding-right: 1px; }
.ptabs .on { background: #515054; color: #e5e5e5; margin-bottom: -1px; }
.pt42 { width: 42px; } .pt56 { width: 56px; } .pt48 { width: 48px; } .pt44 { width: 44px; } .pt49 { width: 49px; } .pt57 { width: 58px; }
.pmenu { margin: 4px 5px 0 auto; }
.colorbody { display: flex; padding: 8px 0 0 5px; height: 82px; }
.sliders { padding-left: 6px; }
.slider { height: 24px; display: flex; align-items: flex-start; margin-top: -1px; margin-bottom: 1px; }
.slider span { width: 15px; line-height: 17px; }
.track { width: 85px; height: 6px; margin-top: 2px; position: relative; }
.track::after { content: ""; position: absolute; right: -4px; top: 6px; width: 10px; height: 8px; background: #bbbabd; clip-path: polygon(50% 0, 100% 70%, 100% 100%, 0 100%, 0 70%); }
.cy { background: linear-gradient(90deg, #1ba9b4 65%, #f7ffff); }
.ma { background: linear-gradient(90deg, #b54b96 30%, #fff5fc); }
.ye { background: linear-gradient(90deg, #dcda38 15%, #fffff5); }
.slider b { width: 47px; height: 18px; margin-left: 5px; padding-left: 5px; background: #38373b; border: 1px solid #29282c; font-weight: 400; line-height: 17px; letter-spacing: -.3px; }
.spectrum { width: 199px; height: 15px; margin-left: 6px; background: linear-gradient(#ffffffc0, transparent 50%, #0009), linear-gradient(90deg, #e9292e, #f4df27 17%, #19a24b 33%, #179ad0 48%, #3d3f99 64%, #df278a 80%, #e52c35); display: flex; justify-content: flex-end; }
.spectrum i { width: 8px; background: linear-gradient(#fff 50%, #000 50%); }
.addadj { margin: 3px 0 5px 9px; font: 600 10px/15px "Noto Sans", sans-serif; letter-spacing: .05px; color: #fff; }
.icons { display: flex; gap: 8px; height: 16px; margin-bottom: 11px; }
.icons svg { width: 16px; height: 16px; }
.icons .wide { width: 18px; margin: 0 -1px; }
.r1 { margin-left: 47px; } .r2 { margin-left: 35px; } .r3 { margin-left: 47px; }
.lrow { height: 27px; flex: none; display: flex; align-items: center; padding-left: 4px; border-bottom: 1px solid #39383c; color: #b5b4b7; }
.muted { color: #b5b4b7; border-color: #414044; background: linear-gradient(#626165, #58575b); }
.s64 { width: 66px; padding-left: 6px; } .s122 { width: 123px; }
.tipo { margin-right: 8px; }
.kinds { margin-left: 23px; }
.toggle { width: 8px; height: 16px; margin-left: 26px; background: linear-gradient(#77767a 45%, #3d3c40 45%); border: 1px solid #38373b; }
.opa { width: 51px; margin-left: 6px; letter-spacing: -.15px; }
.pct { width: 53px; height: 19px; background: #4b4a4e; border: 1px solid #3e3d41; color: #6c6b6f; padding-left: 5px; line-height: 17px; display: flex; justify-content: space-between; }
.pct i { width: 18px; background: #626165; border-left: 1px solid #414044; display: grid; place-items: center; }
.pct i::after { content: ""; border: 3px solid transparent; border-top-color: #ccc; border-bottom: 0; }
.lock { height: 31px; padding-bottom: 2px; }
.bloq { width: 37px; padding-left: 2px; letter-spacing: -.15px; }
.rel { margin-left: 23px; width: 40px; }
.layerlist { flex: 1; background: #49484c; display: flex; flex-direction: column; }
.layer { height: 25px; display: flex; border-bottom: 1px solid #343337; }
.eye { width: 31px; background: #515054; display: grid; place-items: center; border-right: 1px solid #39383c; }
.lbody { width: 196px; background: #50657a; display: flex; align-items: center; }
.thumb { width: 33px; height: 18px; margin-left: 2px; border: 1px solid #1d3045; background: linear-gradient(90deg, #08030b 12px, #fff 12px); }
.lbody em { margin-left: 11px; width: 122px; font-size: 10px; }
.lside { flex: 1; background: #414044; }
.empty { flex: 1; border-right: 15px solid #454448; }
.lfoot { border-top: 1px solid #343337; }
.fx { font: italic 12px "Noto Sans", sans-serif; fill: #99989b; stroke: none; }

.taskbar { height: 31px; flex: none; display: flex; border-top: 1px solid #858488; background: linear-gradient(110deg, #adadad, #bbb 4%, #ddd 6%, #dedddd 26%, #eceaea 31%, #d8d7d7 35%, #e2e1e1 43%, #d0cfcf 47%, #e0dfde 52%, #d0cfce 58%, #e3e2df 65%, #d7d6d3 77%, #dcdad8 81%, #a5a9ac 84%, #b2b6b8 97%, #9a9fa3); }
.orb { margin: -5px 0 0 8px; position: relative; }
.tasks { display: flex; gap: 3px; margin-left: 13px; }
.task { width: 43px; height: 29px; border: 1px solid #858585; border-radius: 3px; background: linear-gradient(#f3f2f2, #ddd); display: grid; place-items: center; box-shadow: inset 0 0 0 1px #f8f8f8; }
.task svg { width: 18px; height: 18px; }
.stack { width: 39px; margin-right: 4px; box-shadow: 3px 0 0 -1px #eee, 4px 0 0 -1px #858585; }
.ai, .psi { width: 16px; height: 15px; font: 600 9px/14px "Open Sans", sans-serif; text-align: center; background: #352009; color: #f59328; }
.psi { background: #172a69; color: #45bde9; }
.tray { margin-left: auto; display: flex; align-items: center; }
.tray time { margin: 0 27px 0 28px; font: 12px/20px "Open Sans", sans-serif; color: #fff; letter-spacing: -.5px; }
.desk { width: 23px; height: 29px; border: 1px solid #777d82; background: linear-gradient(140deg, #a9adb0, #c4c7c9 60%, #999ea3); }
```
